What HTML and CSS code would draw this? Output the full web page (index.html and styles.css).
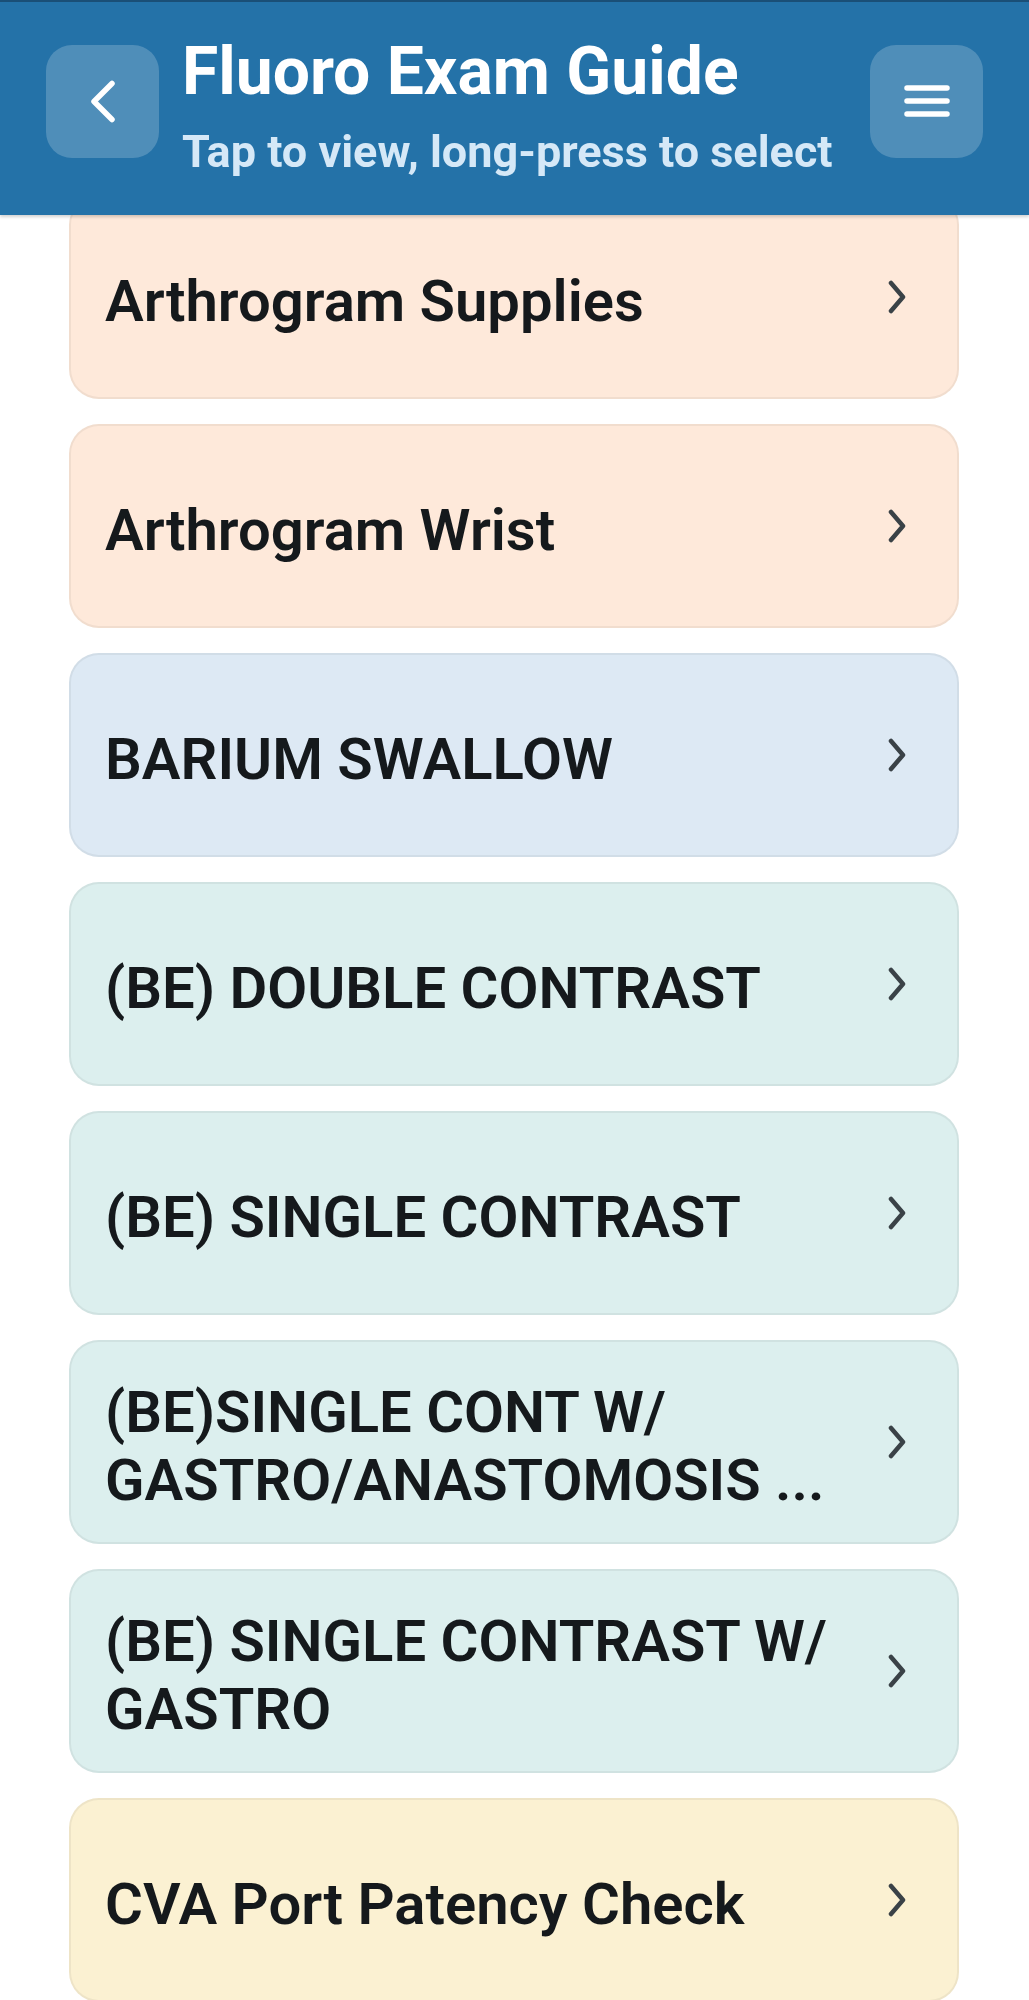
FILE: index.html
```html
<!DOCTYPE html>
<html lang="en">
<head>
<meta charset="utf-8">
<title>Fluoro Exam Guide</title>
<link rel="stylesheet" href="styles.css">
</head>
<body>
<header class="topbar">
  <button class="icon-btn back-btn" aria-label="Back">
    <svg viewBox="0 0 113 113" width="113" height="113"><polyline points="66,38.5 48,56.5 66,74.5" fill="none" stroke="#fff" stroke-width="5.5" stroke-linecap="round" stroke-linejoin="round"/></svg>
  </button>
  <div class="titles">
    <h1 class="title">Fluoro Exam Guide</h1>
    <p class="subtitle">Tap to view, long-press to select</p>
  </div>
  <button class="icon-btn menu-btn" aria-label="Menu">
    <svg viewBox="0 0 113 113" width="113" height="113"><g stroke="#fff" stroke-width="5.5" stroke-linecap="round"><line x1="37" y1="43" x2="77" y2="43"/><line x1="37" y1="56" x2="77" y2="56"/><line x1="37" y1="69" x2="77" y2="69"/></g></svg>
  </button>
</header>

<main class="list">
  <a class="card card-peach"><span class="card-text">Arthrogram Supplies</span><svg class="chev" viewBox="0 0 20 34" width="20" height="34"><polyline points="4,3 16,17 4,31" fill="none" stroke="#3a4247" stroke-width="4.5" stroke-linecap="round" stroke-linejoin="round"/></svg></a>
  <a class="card card-peach"><span class="card-text">Arthrogram Wrist</span><svg class="chev" viewBox="0 0 20 34" width="20" height="34"><polyline points="4,3 16,17 4,31" fill="none" stroke="#3a4247" stroke-width="4.5" stroke-linecap="round" stroke-linejoin="round"/></svg></a>
  <a class="card card-blue"><span class="card-text">BARIUM SWALLOW</span><svg class="chev" viewBox="0 0 20 34" width="20" height="34"><polyline points="4,3 16,17 4,31" fill="none" stroke="#3a4247" stroke-width="4.5" stroke-linecap="round" stroke-linejoin="round"/></svg></a>
  <a class="card card-teal"><span class="card-text">(BE) DOUBLE CONTRAST</span><svg class="chev" viewBox="0 0 20 34" width="20" height="34"><polyline points="4,3 16,17 4,31" fill="none" stroke="#3a4247" stroke-width="4.5" stroke-linecap="round" stroke-linejoin="round"/></svg></a>
  <a class="card card-teal"><span class="card-text">(BE) SINGLE CONTRAST</span><svg class="chev" viewBox="0 0 20 34" width="20" height="34"><polyline points="4,3 16,17 4,31" fill="none" stroke="#3a4247" stroke-width="4.5" stroke-linecap="round" stroke-linejoin="round"/></svg></a>
  <a class="card card-teal"><span class="card-text">(BE)SINGLE CONT W/ GASTRO/ANASTOMOSIS ...</span><svg class="chev" viewBox="0 0 20 34" width="20" height="34"><polyline points="4,3 16,17 4,31" fill="none" stroke="#3a4247" stroke-width="4.5" stroke-linecap="round" stroke-linejoin="round"/></svg></a>
  <a class="card card-teal"><span class="card-text">(BE) SINGLE CONTRAST W/ GASTRO</span><svg class="chev" viewBox="0 0 20 34" width="20" height="34"><polyline points="4,3 16,17 4,31" fill="none" stroke="#3a4247" stroke-width="4.5" stroke-linecap="round" stroke-linejoin="round"/></svg></a>
  <a class="card card-yellow"><span class="card-text">CVA Port Patency Check</span><svg class="chev" viewBox="0 0 20 34" width="20" height="34"><polyline points="4,3 16,17 4,31" fill="none" stroke="#3a4247" stroke-width="4.5" stroke-linecap="round" stroke-linejoin="round"/></svg></a>
</main>
</body>
</html>
```

FILE: styles.css
```css
* { box-sizing: border-box; }

html, body {
  margin: 0;
  padding: 0;
  background: #ffffff;
  font-family: Roboto, "Noto Sans", "Liberation Sans", sans-serif;
}

.topbar {
  position: fixed;
  top: 0;
  left: 0;
  right: 0;
  z-index: 10;
  height: 215px;
  display: flex;
  align-items: flex-start;
  padding: 31px 46px 0 46px;
  background: #2472a8;
  border-top: 2px solid #1a4f77;
  box-shadow: 0 2px 3px rgba(0, 0, 0, 0.18);
}

.icon-btn {
  flex: 0 0 auto;
  width: 113px;
  height: 113px;
  margin-top: 12px;
  padding: 0;
  border: 0;
  border-radius: 26px;
  background: rgba(255, 255, 255, 0.2);
  display: block;
}

.icon-btn svg { display: block; }

.titles {
  flex: 1 1 auto;
  margin-left: 23px;
}

.title {
  margin: 0;
  font-size: 66px;
  line-height: 78px;
  font-weight: 700;
  color: #ffffff;
}

.subtitle {
  margin: 15px 0 0 0;
  font-size: 45px;
  line-height: 51px;
  font-weight: 700;
  color: #d5e8f7;
}

.list {
  display: flex;
  flex-direction: column;
  gap: 25px;
  padding: 195px 70px 40px 69px;
}

.card {
  display: flex;
  align-items: center;
  min-height: 204px;
  padding: 0 50px 0 34px;
  border: 2px solid rgba(0, 0, 0, 0.05);
  border-radius: 30px;
  color: #15191c;
}

.card-peach { background: #fee9da; }
.card-blue { background: #dde9f4; }
.card-teal { background: #dcefee; }
.card-yellow { background: #fbf1d2; }

.card-text {
  flex: 1 1 auto;
  padding-top: 8px;
  font-size: 58px;
  line-height: 68px;
  font-weight: 600;
}

.chev {
  flex: 0 0 auto;
  display: block;
  margin-left: 24px;
}
```
